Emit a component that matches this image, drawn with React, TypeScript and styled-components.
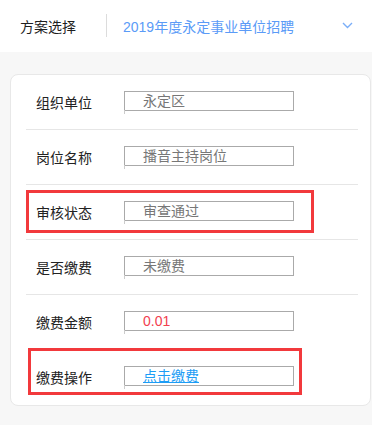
import React from "react";
import styled, { createGlobalStyle } from "styled-components";

type Field = {
  label: string;
  value: string;
  tone?: "plain" | "price" | "link";
  mark?: "status" | "action";
};

const fields: Field[] = [
  { label: "组织单位", value: "永定区" },
  { label: "岗位名称", value: "播音主持岗位" },
  { label: "审核状态", value: "审查通过", mark: "status" },
  { label: "是否缴费", value: "未缴费" },
  { label: "缴费金额", value: "0.01", tone: "price" },
  { label: "缴费操作", value: "点击缴费", tone: "link", mark: "action" },
];

const App = () => {
  return (
    <>
      <GlobalStyle />
      <Page>
        <Header>
          <HeaderLabel>方案选择</HeaderLabel>
          <Divider />
          <PlanName>2019年度永定事业单位招聘</PlanName>
          <Chevron width="11" height="7" viewBox="0 0 11 7">
            <path d="M1 1l4.5 4.5L10 1" fill="none" stroke="#7aaef8" strokeWidth="1.4" />
          </Chevron>
        </Header>
        <Card>
          {fields.map((el, i) => (
            <Row key={el.label} $line={i < fields.length - 2}>
              <Label>{el.label}</Label>
              <ValueBox>
                <Value $tone={el.tone || "plain"}>{el.value}</Value>
              </ValueBox>
              {el.mark && <Mark $kind={el.mark} />}
            </Row>
          ))}
        </Card>
      </Page>
    </>
  );
};

export default App;

const GlobalStyle = createGlobalStyle`
  body {
    margin: 0;
    background: #f7f7f7;
    font-family: "Liberation Sans", "Noto Sans CJK SC", sans-serif;
  }
`;

const Page = styled.div`
  width: 372px;
  height: 425px;
  overflow: hidden;
  background: #f7f7f7;
`;

const Header = styled.div`
  display: flex;
  align-items: center;

  height: 52px;
  padding: 0 19px 0 20px;

  background: #fff;
`;

const HeaderLabel = styled.span`
  width: 86px;

  color: #1f1f1f;
  font-size: 14px;
`;

const Divider = styled.div`
  width: 1px;
  height: 23px;
  margin-top: -2px;

  background: #dcdcdc;
`;

const PlanName = styled.span`
  flex: 1;
  margin-left: 16px;

  color: #5b9bf7;
  font-size: 14px;
`;

const Chevron = styled.svg`
  margin-top: -2px;
`;

const Card = styled.div`
  width: 361px;
  margin: 22px 0 0 10px;
  padding: 0 12px 0 15px;
  box-sizing: border-box;

  background: #fff;
  border: 1px solid #e8e8e8;
  border-radius: 8px;
`;

const Row = styled.div<{ $line: boolean }>`
  position: relative;
  display: flex;
  align-items: center;

  height: 54px;

  border-bottom: 1px solid ${(p) => (p.$line ? "#e6e6e6" : "transparent")};
`;

const Label = styled.span`
  width: 88px;
  padding-left: 10px;

  color: #222;
  font-size: 14px;
`;

const ValueBox = styled.div`
  position: relative;
  display: flex;
  align-items: center;

  width: 170px;
  height: 20px;
  margin-bottom: 3px;
  padding-left: 18px;
  box-sizing: border-box;

  border: 1px solid #aaa;

  &::after {
    content: "";
    position: absolute;
    left: -1px;
    top: 100%;
    width: 1px;
    height: 4px;
    background: #ccc;
  }
`;

const toneColor = {
  plain: "#777",
  price: "#f2404f",
  link: "#1d9df5",
};

const Value = styled.span<{ $tone: "plain" | "price" | "link" }>`
  color: ${(p) => toneColor[p.$tone]};
  font-size: 14px;
  line-height: 18px;
  text-decoration: ${(p) => (p.$tone === "link" ? "underline" : "none")};
`;

const Mark = styled.div<{ $kind: "status" | "action" }>`
  position: absolute;
  left: ${(p) => (p.$kind === "status" ? "0" : "2px")};
  top: ${(p) => (p.$kind === "status" ? "5px" : "-2px")};

  width: ${(p) => (p.$kind === "status" ? "288px" : "274px")};
  height: ${(p) => (p.$kind === "status" ? "43px" : "47px")};
  box-sizing: border-box;

  border: 3px solid #f2393c;
  pointer-events: none;
`;
